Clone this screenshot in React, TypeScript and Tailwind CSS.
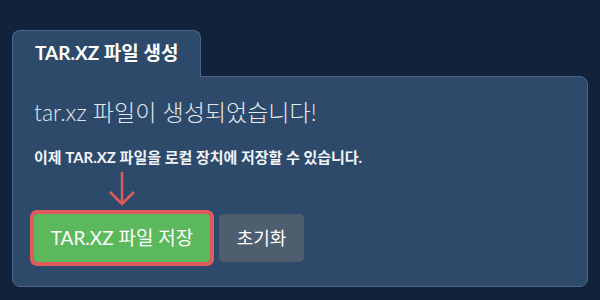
export default function App() {
  return (
    <div
      className="w-[600px] h-[300px] bg-[#11223a] pt-[30px] px-3"
      style={{ fontFamily: "Lato, 'Noto Sans CJK KR', sans-serif" }}
    >
      <div className="relative z-10 -mb-px flex h-[47px] w-[189px] items-center rounded-t-lg border border-b-0 border-[#4a6789] bg-[#2d4a6b] pl-[22px] pb-[2px]">
        <span className="text-[19px] font-bold text-white">TAR.XZ 파일 생성</span>
      </div>
      <div className="h-[211px] rounded-b-lg rounded-tr-lg border border-[#4a6789] bg-[#2d4a6b] px-[21px] pt-[20px]">
        <h2 className="text-[23px] font-light leading-[30px] text-[#e3e8ef]">tar.xz 파일이 생성되었습니다!</h2>
        <p className="mt-[19px] text-[15px] font-bold leading-[22px] text-[#f1f4f8]">
          이제 TAR.XZ 파일을 로컬 장치에 저장할 수 있습니다.
        </p>
        <div className="mt-[46px] flex gap-[9px]">
          <div className="relative">
            <svg
              className="absolute left-[74px] top-[-43px]"
              width="28"
              height="36"
              viewBox="0 0 28 36"
              fill="none"
              stroke="#e05c5c"
              strokeWidth="2.5"
            >
              <path d="M14 1 L14 33" />
              <path d="M2 21 L14 33 L26 21" />
            </svg>
            <button className="h-[48px] w-[176px] rounded-[3px] bg-[#5cb85c] text-[19px] text-white outline-4 outline-[#e05c5c]">
              TAR.XZ 파일 저장
            </button>
          </div>
          <button className="h-[48px] w-[85px] rounded-[5px] bg-[#4f5e6e] text-[18px] text-white">초기화</button>
        </div>
      </div>
    </div>
  )
}
